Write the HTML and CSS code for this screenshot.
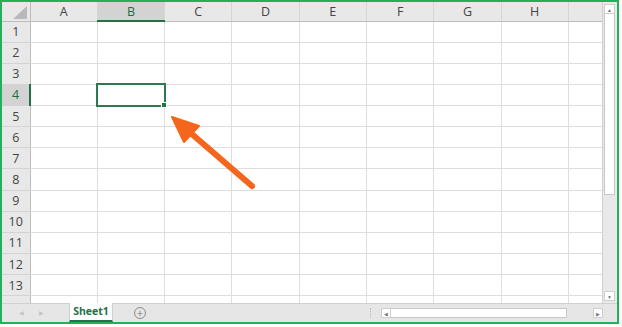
FILE: index.html
```html
<!DOCTYPE html>
<html lang="en">
<head>
    <meta charset="UTF-8">
    <title>Sheet1</title>
    <link rel="stylesheet" href="styles.css">
</head>
<body>
    <div class="window">
        <div class="main">
            <!-- Worksheet grid -->
            <div class="sheet">
                <table class="grid">
                    <colgroup>
                        <col class="col-rh">
                        <col><col><col><col><col><col><col><col><col>
                    </colgroup>
                    <tr class="head">
                        <th class="corner"><svg width="14" height="13" viewBox="0 0 14 13"><polygon points="14,0 14,13 0,13" fill="#b9b9b9"/></svg></th>
                        <th>A</th><th class="sel-col">B</th><th>C</th><th>D</th><th>E</th><th>F</th><th>G</th><th>H</th><th></th>
                    </tr>
                    <tr><th>1</th><td></td><td></td><td></td><td></td><td></td><td></td><td></td><td></td><td></td></tr>
                    <tr><th>2</th><td></td><td></td><td></td><td></td><td></td><td></td><td></td><td></td><td></td></tr>
                    <tr><th>3</th><td></td><td></td><td></td><td></td><td></td><td></td><td></td><td></td><td></td></tr>
                    <tr><th class="sel-row">4</th><td></td><td class="active"></td><td></td><td></td><td></td><td></td><td></td><td></td><td></td></tr>
                    <tr><th>5</th><td></td><td></td><td></td><td></td><td></td><td></td><td></td><td></td><td></td></tr>
                    <tr><th>6</th><td></td><td></td><td></td><td></td><td></td><td></td><td></td><td></td><td></td></tr>
                    <tr><th>7</th><td></td><td></td><td></td><td></td><td></td><td></td><td></td><td></td><td></td></tr>
                    <tr><th>8</th><td></td><td></td><td></td><td></td><td></td><td></td><td></td><td></td><td></td></tr>
                    <tr><th>9</th><td></td><td></td><td></td><td></td><td></td><td></td><td></td><td></td><td></td></tr>
                    <tr><th>10</th><td></td><td></td><td></td><td></td><td></td><td></td><td></td><td></td><td></td></tr>
                    <tr><th>11</th><td></td><td></td><td></td><td></td><td></td><td></td><td></td><td></td><td></td></tr>
                    <tr><th>12</th><td></td><td></td><td></td><td></td><td></td><td></td><td></td><td></td><td></td></tr>
                    <tr><th>13</th><td></td><td></td><td></td><td></td><td></td><td></td><td></td><td></td><td></td></tr>
                    <tr><th></th><td></td><td></td><td></td><td></td><td></td><td></td><td></td><td></td><td></td></tr>
                </table>
            </div>

            <!-- Vertical scrollbar -->
            <div class="vscroll">
                <div class="sb-btn">&#9650;</div>
                <div class="sb-thumb-v"></div>
                <div class="sb-track"></div>
                <div class="sb-btn">&#9660;</div>
            </div>
        </div>

        <!-- Sheet tabs + horizontal scrollbar -->
        <div class="tabbar">
            <span class="nav">&#9664;</span>
            <span class="nav">&#9654;</span>
            <div class="tab">Sheet1</div>
            <div class="add">+</div>
            <div class="spacer"></div>
            <div class="dots"></div>
            <div class="hscroll">
                <div class="sb-btn">&#9664;</div>
                <div class="sb-thumb-h"></div>
                <div class="sb-track"></div>
                <div class="sb-btn">&#9654;</div>
            </div>
        </div>

        <!-- Annotation arrow -->
        <svg class="arrow" width="622" height="327" viewBox="0 0 622 327">
            <line x1="252" y1="186" x2="186" y2="129" stroke="#f4661b" stroke-width="6" stroke-linecap="round"/>
            <polygon points="172,117 199,126 184,142" fill="#f4661b" stroke="#f4661b" stroke-width="2" stroke-linejoin="round"/>
        </svg>
    </div>
</body>
</html>
```

FILE: styles.css
```css
body {
    margin: 0;
    background-color: #ffffff;
    font-family: 'Open Sans', 'Liberation Sans', sans-serif;
}
.window {
    position: relative;
    width: 615px;
    height: 320px;
    border: 2px solid #22b05b; /* green frame */
    display: flex;
    flex-direction: column;
    background-color: #ffffff;
}
.main {
    display: flex;
    height: 301px;
}
.sheet {
    width: 601px;
    overflow: hidden;
}

/* Grid */
.grid {
    border-collapse: collapse;
    table-layout: fixed;
    width: 634px;
}
.grid col {
    width: 67.3px;
}
.grid col.col-rh {
    width: 28px;
}
.grid tr {
    height: 21.15px;
}
.grid tr.head {
    height: 19px;
}
.grid td {
    border-right: 1px solid #dedede;
    border-bottom: 1px solid #dedede;
    padding: 0;
}
.grid th {
    background-color: #e8e8e8;
    color: #444444;
    font-weight: normal;
    font-size: 12.5px;
    padding: 0;
    text-align: center;
    border-right: 1px solid #d0d0d0;
    border-bottom: 1px solid #d4d4d4;
}
.grid tr.head th {
    border-right: 1px solid #d6d6d6;
    border-bottom: 1px solid #bdbdbd;
}
.grid th.corner {
    text-align: right;
    vertical-align: bottom;
    padding: 0 3px 2px 0;
    line-height: 0;
}
.grid tr th:first-child {
    border-right: 1px solid #bdbdbd;
}
.grid tr.head th.sel-col {
    background-color: #d3d3d3;
    color: #216b44;
    border-bottom: 2px solid #217346;
}
.grid th.sel-row {
    background-color: #d3d3d3;
    color: #216b44;
}
.grid tr th.sel-row:first-child {
    border-right: 2px solid #217346;
}
.grid td.active {
    position: relative;
    outline: 2px solid #2e7a50;
    outline-offset: -1px;
}
.grid td.active::after {
    content: "";
    position: absolute;
    right: -3px;
    bottom: -3px;
    width: 4px;
    height: 4px;
    background-color: #217346;
    border: 1px solid #ffffff;
}

/* Scrollbars */
.vscroll {
    width: 11px;
    padding: 2px 2px 2px 1px;
    background-color: #e9e9e9;
    display: flex;
    flex-direction: column;
    border-left: 1px solid #d0d0d0;
}
.sb-btn {
    height: 10px;
    flex: none;
    background-color: #ffffff;
    border: 1px solid #cfcfcf;
    color: #777777;
    font-size: 5px;
    line-height: 10px;
    text-align: center;
    box-sizing: border-box;
}
.sb-thumb-v {
    height: 181px;
    background-color: #ffffff;
    border: 1px solid #c8c8c8;
    border-top: none;
    box-sizing: border-box;
}
.sb-track {
    flex: 1;
}
.tabbar {
    flex: 1;
    display: flex;
    align-items: stretch;
    background-color: #e6e6e6;
    border-top: 1px solid #d0d0d0;
}
.nav {
    color: #c4c4c4;
    font-size: 6px;
    line-height: 18px;
    margin-left: 17px;
}
.nav + .nav {
    margin-left: 15px;
}
.tab {
    margin-left: 25px;
    margin-top: -1px;
    width: 42px;
    background-color: #ffffff;
    color: #217346;
    font-weight: bold;
    font-size: 10.5px;
    text-align: center;
    line-height: 16px;
    border-bottom: 2px solid #217346;
    border-left: 1px solid #cfcfcf;
    border-right: 1px solid #cfcfcf;
}
.add {
    align-self: center;
    margin-left: 21px;
    width: 10px;
    height: 10px;
    border: 1px solid #8a8a8a;
    border-radius: 50%;
    color: #777777;
    font-size: 11px;
    line-height: 10px;
    text-align: center;
}
.spacer {
    flex: 1;
}
.dots {
    align-self: center;
    width: 1px;
    height: 10px;
    margin-right: 9px;
    border-left: 1px dotted #bbbbbb;
}
.hscroll {
    align-self: center;
    width: 222px;
    height: 10px;
    margin-right: 14px;
    display: flex;
}
.hscroll .sb-btn {
    width: 10px;
    height: 10px;
}
.sb-thumb-h {
    width: 176px;
    background-color: #ffffff;
    border: 1px solid #c8c8c8;
    border-left: none;
    box-sizing: border-box;
}

/* Annotation */
.arrow {
    position: absolute;
    left: -2px;
    top: -2px;
    pointer-events: none;
}
```
